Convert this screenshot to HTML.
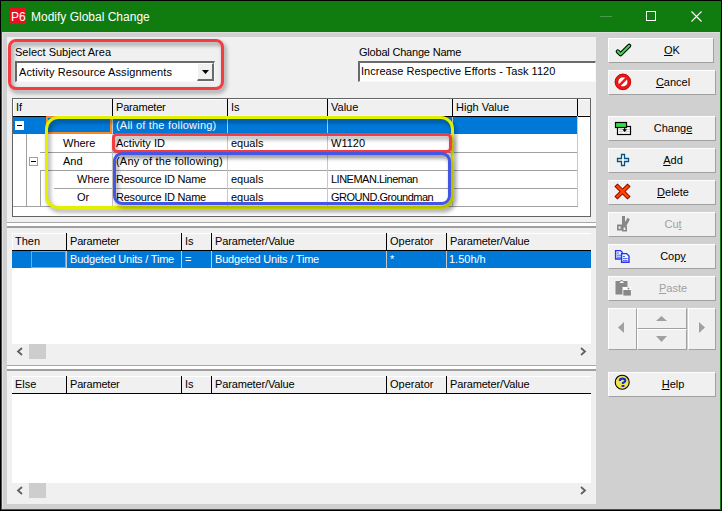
<!DOCTYPE html>
<html><head><meta charset="utf-8">
<style>
*{margin:0;padding:0;box-sizing:border-box}
html,body{width:722px;height:511px;overflow:hidden;background:#000}
body{position:relative;font-family:"Liberation Sans",sans-serif;font-size:11px;color:#000}
.a{position:absolute}
.t{position:absolute;white-space:nowrap;line-height:13px}
#frame{left:1px;top:1px;width:720px;height:509px;background:#107c10}
#body{left:2px;top:32px;width:718px;height:477px;background:#d0d0d0;border-top:1px solid #dcdcdc;border-left:1px solid #e2e2e2}
#panel{left:7px;top:37px;width:589px;height:467px;background:#f0f0f0}
.inp{background:#fff;border-top:2px solid #6a6a6a;border-left:2px solid #6a6a6a;border-bottom:1px solid #f8f8f8;border-right:1px solid #f8f8f8}
.btn{position:absolute;left:608px;width:108px;height:25px;background:#f0f0f0;border-top:1px solid #fff;border-left:1px solid #fff;border-right:1px solid #a0a0a0;border-bottom:1px solid #a0a0a0;text-align:center}
.btn span{position:absolute;left:0;right:0;top:5px;line-height:13px;text-align:center;padding-left:22px}
.btn.dis span{color:#a0a0a0}
.u{text-decoration:underline}
.sel{background:#0078d7;color:#fff}
.hl{background:#f0f0f0}
.vl{position:absolute;width:1px;background:#000}
.gl{position:absolute;background:#a0a0a0}
</style></head><body>
<div id="frame" class="a"></div>
<!-- title -->
<div class="a" style="left:10px;top:8px;width:16px;height:16px;background:#e81123"></div>
<div class="t" style="left:11px;top:11px;color:#fff;font-size:12px">P6</div>
<div class="t" style="left:31px;top:11px;color:#fff;font-size:12px">Modify Global Change</div>
<div class="a" style="left:600px;top:16px;width:12px;height:1px;background:#4b9a4b"></div>
<div class="a" style="left:646px;top:11px;width:10px;height:10px;border:1px solid #fff"></div>
<svg class="a" style="left:691px;top:11px" width="11" height="11"><path d="M0.5 0.5L10.5 10.5M10.5 0.5L0.5 10.5" stroke="#fff" stroke-width="1.1"/></svg>

<div id="body" class="a"></div>
<div id="panel" class="a"></div>

<!-- select subject area -->
<div class="t" style="left:15px;top:46px">Select Subject Area</div>
<div class="a inp" style="left:15px;top:61px;width:200px;height:21px"></div>
<div class="t" style="left:19px;top:66px;letter-spacing:0.09px">Activity Resource Assignments</div>
<div class="a" style="left:197px;top:63px;width:17px;height:18px;background:#f0f0f0;border-left:1px solid #fff;border-top:1px solid #fff;border-right:2px solid #6a6a6a;border-bottom:2px solid #6a6a6a"></div>
<svg class="a" style="left:202px;top:70px" width="7" height="4"><path d="M0 0H7L3.5 4Z" fill="#000"/></svg>

<div class="t" style="left:359px;top:46px;letter-spacing:-0.2px">Global Change Name</div>
<div class="a inp" style="left:358px;top:61px;width:238px;height:21px"></div>
<div class="t" style="left:361px;top:65px;letter-spacing:0.03px">Increase Respective Efforts - Task 1120</div>

<!-- grid 1 -->
<div class="a" style="left:12px;top:98px;width:579px;height:119px;background:#fff;border:1px solid #646464"></div>
<div class="a hl" style="left:13px;top:99px;width:577px;height:17px;border-top:1px solid #fff;border-left:1px solid #fff;border-bottom:1px solid #fafafa"></div>
<div class="a" style="left:13px;top:116px;width:577px;height:1px;background:#000"></div>
<div class="vl" style="left:112px;top:99px;height:17px"></div>
<div class="vl" style="left:227px;top:99px;height:17px"></div>
<div class="vl" style="left:327px;top:99px;height:17px"></div>
<div class="vl" style="left:452px;top:99px;height:17px"></div>
<div class="vl" style="left:577px;top:99px;height:17px"></div>
<div class="t" style="left:16px;top:101px">If</div>
<div class="t" style="left:116px;top:101px;letter-spacing:-0.2px">Parameter</div>
<div class="t" style="left:231px;top:101px">Is</div>
<div class="t" style="left:331px;top:101px">Value</div>
<div class="t" style="left:456px;top:101px">High Value</div>

<div class="a sel" style="left:13px;top:117px;width:564px;height:17px"></div>


<!-- grid1 row lines -->
<div class="gl" style="left:13px;top:206px;width:565px;height:1px"></div>
<div class="gl" style="left:40px;top:152px;width:538px;height:1px;background:#a0a0a0"></div>
<div class="gl" style="left:40px;top:170px;width:538px;height:1px"></div>
<div class="gl" style="left:54px;top:188px;width:524px;height:1px"></div>
<div class="gl" style="left:26px;top:134px;width:1px;height:72px"></div>
<div class="gl" style="left:40px;top:170px;width:1px;height:36px"></div>
<div class="gl" style="left:112px;top:117px;width:1px;height:89px;background:#c8c8c8"></div>
<div class="gl" style="left:227px;top:117px;width:1px;height:89px;background:#c8c8c8"></div>
<div class="gl" style="left:327px;top:117px;width:1px;height:89px;background:#c8c8c8"></div>
<div class="gl" style="left:452px;top:117px;width:1px;height:89px;background:#c8c8c8"></div>
<div class="gl" style="left:577px;top:116px;width:1px;height:90px;background:#c8c8c8"></div>
<!-- minus boxes -->
<div class="a" style="left:15px;top:121px;width:9px;height:9px;background:#fff"></div>
<div class="a" style="left:17px;top:125px;width:5px;height:1px;background:#000"></div>
<div class="a" style="left:29px;top:157px;width:9px;height:9px;background:#fff;border:1px solid #a0a0a0"></div>
<div class="a" style="left:31px;top:161px;width:5px;height:1px;background:#000"></div>
<!-- row texts -->
<div class="t" style="left:116px;top:119px;color:#fff;letter-spacing:0.2px">(All of the following)</div>
<div class="t" style="left:63px;top:137px">Where</div>
<div class="t" style="left:116px;top:137px">Activity ID</div>
<div class="t" style="left:231px;top:137px">equals</div>
<div class="t" style="left:331px;top:137px">W1120</div>
<div class="t" style="left:63px;top:155px">And</div>
<div class="t" style="left:116px;top:155px;letter-spacing:0.19px">(Any of the following)</div>
<div class="t" style="left:77px;top:173px">Where</div>
<div class="t" style="left:116px;top:173px;letter-spacing:-0.22px">Resource ID Name</div>
<div class="t" style="left:231px;top:173px">equals</div>
<div class="t" style="left:331px;top:173px;letter-spacing:-0.5px">LINEMAN.Lineman</div>
<div class="t" style="left:77px;top:191px">Or</div>
<div class="t" style="left:116px;top:191px;letter-spacing:-0.22px">Resource ID Name</div>
<div class="t" style="left:231px;top:191px">equals</div>
<div class="t" style="left:331px;top:191px;letter-spacing:-0.49px">GROUND.Groundman</div>
<!-- focus rect -->
<div class="a" style="left:46px;top:116px;width:66px;height:18px;border:2px solid #f7891f"></div>

<!-- splitter 1 -->
<div class="a" style="left:7px;top:222px;width:589px;height:1px;background:#a8a8a8"></div>
<div class="a" style="left:7px;top:223px;width:589px;height:3px;background:#fff"></div>
<div class="a" style="left:7px;top:226px;width:589px;height:2px;background:#a0a0a0"></div>

<!-- grid 2 -->
<div class="a" style="left:12px;top:233px;width:579px;height:111px;background:#fff"></div>
<div class="a hl" style="left:12px;top:233px;width:579px;height:17px;border-top:1px solid #fff;border-left:1px solid #fff"></div>
<div class="a" style="left:12px;top:250px;width:579px;height:1px;background:#000"></div>
<div class="vl" style="left:66px;top:233px;height:17px"></div>
<div class="vl" style="left:181px;top:233px;height:17px"></div>
<div class="vl" style="left:211px;top:233px;height:17px"></div>
<div class="vl" style="left:386px;top:233px;height:17px"></div>
<div class="vl" style="left:446px;top:233px;height:17px"></div>
<div class="t" style="left:15px;top:235px">Then</div>
<div class="t" style="left:70px;top:235px;letter-spacing:-0.2px">Parameter</div>
<div class="t" style="left:185px;top:235px">Is</div>
<div class="t" style="left:215px;top:235px;letter-spacing:-0.15px">Parameter/Value</div>
<div class="t" style="left:390px;top:235px">Operator</div>
<div class="t" style="left:450px;top:235px;letter-spacing:-0.15px">Parameter/Value</div>
<div class="a sel" style="left:12px;top:251px;width:579px;height:17px"></div>
<div class="gl" style="left:66px;top:251px;width:1px;height:17px;background:#c8c8c8"></div>
<div class="gl" style="left:181px;top:251px;width:1px;height:17px;background:#c8c8c8"></div>
<div class="gl" style="left:211px;top:251px;width:1px;height:17px;background:#c8c8c8"></div>
<div class="gl" style="left:386px;top:251px;width:1px;height:17px;background:#c8c8c8"></div>
<div class="gl" style="left:446px;top:251px;width:1px;height:17px;background:#c8c8c8"></div>
<div class="a" style="left:31px;top:251px;width:35px;height:17px;border:1px solid #f7891f"></div>
<div class="t" style="left:70px;top:253px;color:#fff;letter-spacing:-0.2px">Budgeted Units / Time</div>
<div class="t" style="left:185px;top:253px;color:#fff">=</div>
<div class="t" style="left:215px;top:253px;color:#fff;letter-spacing:-0.2px">Budgeted Units / Time</div>
<div class="t" style="left:390px;top:253px;color:#fff">*</div>
<div class="t" style="left:449px;top:253px;color:#fff">1.50h/h</div>
<!-- scrollbar 2 -->
<div class="a hl" style="left:12px;top:344px;width:579px;height:15px"></div>
<div class="a" style="left:29px;top:344px;width:17px;height:15px;background:#cdcdcd"></div>
<svg class="a" style="left:16px;top:347px" width="8" height="9"><path d="M6 1L2 4.5L6 8" stroke="#606060" stroke-width="1.8" fill="none"/></svg>
<svg class="a" style="left:579px;top:347px" width="8" height="9"><path d="M2 1L6 4.5L2 8" stroke="#606060" stroke-width="1.8" fill="none"/></svg>

<!-- splitter 2 -->
<div class="a" style="left:7px;top:365px;width:589px;height:1px;background:#a8a8a8"></div>
<div class="a" style="left:7px;top:366px;width:589px;height:3px;background:#fff"></div>
<div class="a" style="left:7px;top:369px;width:589px;height:2px;background:#a0a0a0"></div>

<!-- grid 3 -->
<div class="a" style="left:12px;top:376px;width:579px;height:107px;background:#fff"></div>
<div class="a hl" style="left:12px;top:376px;width:579px;height:17px;border-top:1px solid #fff;border-left:1px solid #fff"></div>
<div class="a" style="left:12px;top:393px;width:579px;height:1px;background:#000"></div>
<div class="vl" style="left:66px;top:376px;height:17px"></div>
<div class="vl" style="left:181px;top:376px;height:17px"></div>
<div class="vl" style="left:211px;top:376px;height:17px"></div>
<div class="vl" style="left:386px;top:376px;height:17px"></div>
<div class="vl" style="left:446px;top:376px;height:17px"></div>
<div class="t" style="left:15px;top:378px">Else</div>
<div class="t" style="left:70px;top:378px;letter-spacing:-0.2px">Parameter</div>
<div class="t" style="left:185px;top:378px">Is</div>
<div class="t" style="left:215px;top:378px;letter-spacing:-0.15px">Parameter/Value</div>
<div class="t" style="left:390px;top:378px">Operator</div>
<div class="t" style="left:450px;top:378px;letter-spacing:-0.15px">Parameter/Value</div>
<div class="a hl" style="left:12px;top:483px;width:579px;height:15px"></div>
<div class="a" style="left:29px;top:483px;width:17px;height:15px;background:#cdcdcd"></div>
<svg class="a" style="left:16px;top:486px" width="8" height="9"><path d="M6 1L2 4.5L6 8" stroke="#606060" stroke-width="1.8" fill="none"/></svg>
<svg class="a" style="left:579px;top:486px" width="8" height="9"><path d="M2 1L6 4.5L2 8" stroke="#606060" stroke-width="1.8" fill="none"/></svg>

<!-- annotations -->
<div class="a" style="left:8px;top:39px;width:216px;height:51px;border:3px solid #f43c44;border-radius:8px;filter:drop-shadow(2px 3px 2px rgba(0,0,0,.42))"></div>
<div class="a" style="left:45px;top:116px;width:409px;height:93px;border:3px solid #e3ef00;border-radius:13px;filter:drop-shadow(2px 3px 2px rgba(0,0,0,.42))"></div>
<div class="a" style="left:112px;top:133px;width:340px;height:20px;border:3px solid #f43c44;border-radius:5px;filter:drop-shadow(2px 3px 2px rgba(0,0,0,.42))"></div>
<div class="a" style="left:113px;top:152px;width:338px;height:53px;border:3px solid #4356e6;border-radius:9px;filter:drop-shadow(2px 3px 2px rgba(0,0,0,.42))"></div>

<!-- buttons -->
<div class="btn" style="top:38px;width:106px"><span style="padding-left:22px"><u>O</u>K</span></div>
<div class="btn" style="top:70px"><span><u>C</u>ancel</span></div>
<div class="btn" style="top:116px"><span>Chang<u>e</u></span></div>
<div class="btn" style="top:148px"><span><u>A</u>dd</span></div>
<div class="btn" style="top:180px"><span><u>D</u>elete</span></div>
<div class="btn dis" style="top:212px"><span>Cu<u>t</u></span></div>
<div class="btn" style="top:244px"><span>Cop<u>y</u></span></div>
<div class="btn dis" style="top:276px"><span><u>P</u>aste</span></div>
<div class="btn" style="top:308px;width:29px;height:42px"></div>
<div class="btn" style="top:308px;left:637px;width:50px;height:21px"></div>
<div class="btn" style="top:329px;left:637px;width:50px;height:21px"></div>
<div class="btn" style="top:308px;left:688px;width:28px;height:42px"></div>
<div class="btn" style="top:372px"><span><u>H</u>elp</span></div>
<svg class="a" style="left:0;top:0" width="722" height="511">
 <!-- nav arrows -->
 <path d="M624 322L618 327.5L624 333Z" fill="#a0a0a0"/>
 <path d="M656 321L661.5 316L667 321Z" fill="#a0a0a0"/>
 <path d="M656 336L661.5 342L667 336Z" fill="#a0a0a0"/>
 <path d="M699 322L705 327.5L699 333Z" fill="#a0a0a0"/>
 <!-- OK check -->
 <path d="M617.8 51.4L620.6 54.2L629.2 45.8" fill="none" stroke="#000" stroke-width="4.2" stroke-linecap="round" stroke-linejoin="round"/>
 <path d="M617.8 51.4L620.6 54.2L629.2 45.8" fill="none" stroke="#33dd44" stroke-width="2.2" stroke-linecap="round" stroke-linejoin="round"/>
 <!-- cancel -->
 <circle cx="622.9" cy="81.9" r="6.5" fill="#fff" stroke="#f01818" stroke-width="3.2"/>
 <circle cx="622.9" cy="81.9" r="7.8" fill="none" stroke="#b80000" stroke-width="0.8"/>
 <circle cx="622.9" cy="81.9" r="5" fill="none" stroke="#c00000" stroke-width="0.6"/>
 <path d="M626.6 78.2L619.2 85.6" stroke="#f01818" stroke-width="2.6"/>
 <!-- change -->
 <rect x="617.5" y="126.5" width="13" height="8" fill="#fff" stroke="#000" stroke-width="1.2"/>
 <path d="M619 129.5H630M619 131.5H630M621 127V134M626 127V134" stroke="#c8c8c8" stroke-width="0.8"/>
 <rect x="615.5" y="122.5" width="11" height="5" fill="#33dd44" stroke="#000" stroke-width="1.2"/>
 <path d="M622.2 129.2H627L624.6 132Z" fill="#000"/>
 <path d="M624.6 127V130" stroke="#000" stroke-width="1"/>
 <!-- add -->
 <path d="M621.5 154.5H624.5V158.5H628.5V161.5H624.5V165.5H621.5V161.5H617.5V158.5H621.5Z" fill="#fff" stroke="#0b4f80" stroke-width="1.3"/>
 <!-- delete -->
 <path d="M617.5 186.5L627.5 196.5M627.5 186.5L617.5 196.5" stroke="#7a0000" stroke-width="4.4" stroke-linecap="square"/>
 <path d="M617.5 186.5L627.5 196.5M627.5 186.5L617.5 196.5" stroke="#ff4400" stroke-width="2.6" stroke-linecap="square"/>
 <!-- cut -->
 <g fill="#888">
  <rect x="622" y="216" width="3" height="10"/>
  <path d="M627.6 217.8L629.8 219.6L626.2 226.2L623.2 225Z"/>
  <path d="M617 224.5H622.5V230.5H617Z M618.6 226.4V228.8H620.6V226.4Z" fill-rule="evenodd"/>
  <path d="M622 226H627V231.6H622Z M623.6 227.6V230H625.4V227.6Z" fill-rule="evenodd"/>
 </g>
 <!-- copy -->
 <g>
  <path d="M615.6 250.6H620.6L622.2 252.2V259H615.6Z" fill="#dff" stroke="#3030ee" stroke-width="1.4"/>
  <path d="M617 253H619M617 255.2H621M617 257.2H621" stroke="#3333ee" stroke-width="0.8"/>
  <path d="M621.6 253.6H626.6L629 256V262.2H621.6Z" fill="#dff" stroke="#3030ee" stroke-width="1.4"/>
  <path d="M623 256.5H625M623 258.6H627.6M623 260.6H627.6" stroke="#3333ee" stroke-width="0.8"/>
 </g>
 <!-- paste -->
 <g fill="#888">
  <path d="M615.5 281H620L621 280H622L623 281H627.5V294.5H615.5Z"/>
  <path d="M619.5 283H624L622.5 281.2H621Z" fill="#fff"/>
  <rect x="622.5" y="287" width="8.4" height="8.6" fill="#fff"/>
  <rect x="623.3" y="290" width="7.6" height="5.6" fill="#888"/>
  <circle cx="628.5" cy="288.5" r="1" fill="#888"/>
 </g>
 <!-- help -->
 <circle cx="622.2" cy="382.2" r="7" fill="#f3e34a" stroke="#000" stroke-width="1.1"/>
 <path d="M619.8 381Q619.8 378.7 622.5 378.7Q625.3 378.7 625.3 380.6Q625.3 382 623 382.9V384" fill="none" stroke="#1030d0" stroke-width="2.2"/>
 <rect x="621.6" y="385" width="2.8" height="2" fill="#1030d0"/>
</svg>
</body></html>
